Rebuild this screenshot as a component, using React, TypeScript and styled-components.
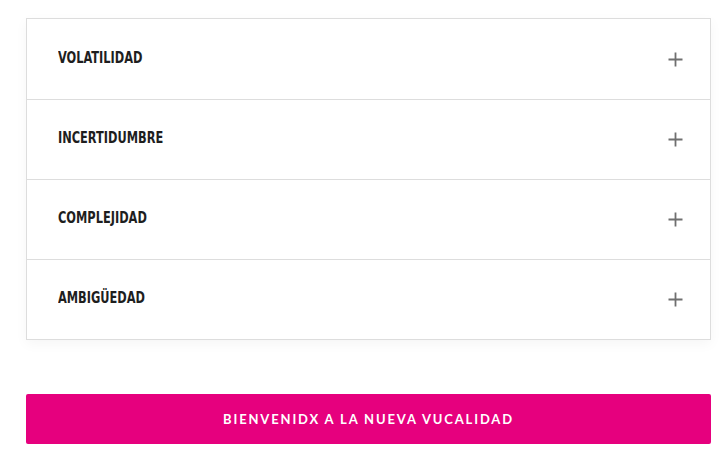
import React from "react";
import styled, { createGlobalStyle } from "styled-components";

const items = [
  { id: 1, title: "VOLATILIDAD" },
  { id: 2, title: "INCERTIDUMBRE" },
  { id: 3, title: "COMPLEJIDAD" },
  { id: 4, title: "AMBIGÜEDAD" }
];

const GlobalStyle = createGlobalStyle`
  body {
    margin: 0;
    background: #ffffff;
    font-family: "Lato", "Liberation Sans", sans-serif;
  }
`;

const PlusIcon = () => (
  <svg width="15" height="15" viewBox="0 0 15 15">
    <path d="M7.5 0.5v14M0.5 7.5h14" stroke="#6f6f6f" strokeWidth="1.8" fill="none" />
  </svg>
);

const App = () => {
  return (
    <Page>
      <GlobalStyle />
      <Card>
        {items.map((item) => (
          <Row key={item.id}>
            <Title>{item.title}</Title>
            <Toggle>
              <PlusIcon />
            </Toggle>
          </Row>
        ))}
      </Card>
      <Button>BIENVENIDX A LA NUEVA VUCALIDAD</Button>
    </Page>
  );
};

export default App;

const Page = styled.div`
  padding: 18px 15px 0 26px;
`;

const Card = styled.div`
  border: 1px solid #dddddd;
  padding-top: 1px;
  background: #ffffff;
  box-shadow: 0 4px 12px rgba(0, 0, 0, 0.04);
`;

const Row = styled.div`
  height: 80px;
  display: flex;
  align-items: center;
  justify-content: space-between;
  padding: 0 27px 0 31px;
  border-bottom: 1px solid #dddddd;
  box-sizing: border-box;
  &:last-child {
    border-bottom: none;
    height: 79px;
  }
`;

const Title = styled.h3`
  margin: 0 0 4px;
  font-family: "DejaVu Sans Condensed", "Liberation Sans", sans-serif;
  font-weight: 700;
  font-size: 16px;
  color: #1e1e1e;
  transform: scaleX(0.79);
  transform-origin: left center;
`;

const Toggle = styled.span`
  display: flex;
  width: 15px;
  height: 15px;
`;

const Button = styled.button`
  display: block;
  width: 100%;
  height: 50px;
  margin-top: 54px;
  border: none;
  border-radius: 2px;
  background: #e6007e;
  color: #ffffff;
  font-family: "Lato", "Liberation Sans", sans-serif;
  font-weight: 700;
  font-size: 13px;
  letter-spacing: 1.85px;
  cursor: pointer;
`;
